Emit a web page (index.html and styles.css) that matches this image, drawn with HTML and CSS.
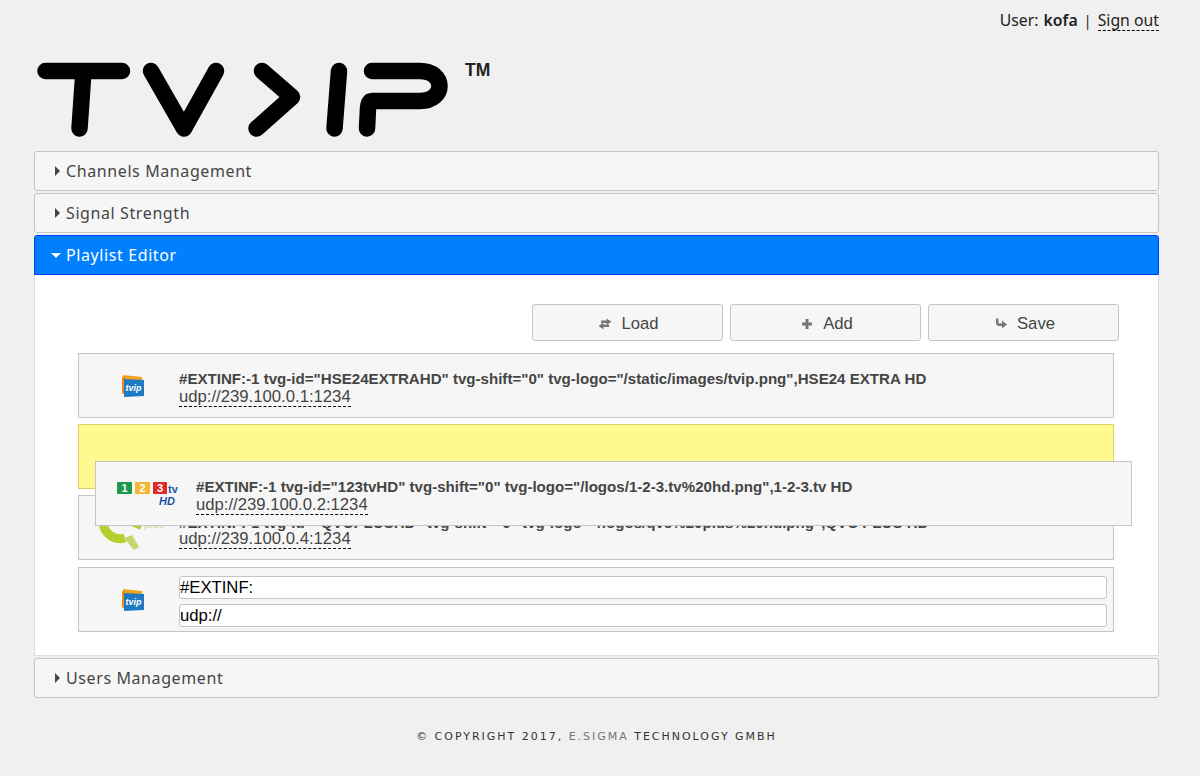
FILE: index.html
```html
<!DOCTYPE html>
<html lang="en">
<head>
<meta charset="utf-8">
<title>TV&gt;IP</title>
<link rel="stylesheet" href="styles.css">
</head>
<body>
<div class="page">
  <div class="userbar">User: <b>kofa</b> <span class="sep">|</span> <a class="dash" href="#">Sign out</a></div>
  <div class="logo">
    <svg width="456" height="97" viewBox="34 -8.500 456 97">
      <g fill="none" stroke="#000" stroke-width="16.500" stroke-linecap="round" stroke-linejoin="round">
        <path d="M45.500 8.500H122M83.500 8.500L79.500 66"/>
        <path d="M151 8.500L184 66L216 8.500"/>
        <path d="M262 8.500L292 34.500L256.500 66"/>
        <path d="M339 8.500L334.500 66"/>
        <path d="M372 8.500H420C446 8.500 446 38.500 420 38.500H372.500C369 38.500 368.500 41 368 46L367 66"/>
      </g>
    </svg>
    <span class="tm">TM</span>
  </div>
  <div class="acc"><span class="tri right"></span>Channels Management</div>
  <div class="acc"><span class="tri right"></span>Signal Strength</div>
  <div class="acc active"><span class="tri down"></span>Playlist Editor</div>
  <div class="panel">
    <div class="toolbar">
      <button class="btn">
        <svg class="ic" viewBox="0 0 14 12"><path d="M3 2.500H8.500V.5L13.500 3.800L8.500 7V5H3ZM11 6.500H5.500V4.500L.5 8L5.500 11.500V9H11Z" fill="#777"/></svg>Load</button>
      <button class="btn">
        <svg class="ic" viewBox="0 0 14 12"><path d="M5.500 1H8.500V4.500H12V7.500H8.500V11H5.500V7.500H2V4.500H5.500Z" fill="#777"/></svg>Add</button>
      <button class="btn">
        <svg class="ic" viewBox="0 0 14 12"><path d="M2 .5H4.500V4C4.500 5 5 5.500 6 5.500H8V2.500L13 6.500L8 10.500V8H5.500C3 8 2 6.500 2 4.500Z" fill="#777"/></svg>Save</button>
    </div>
    <div class="list">
      <div class="row">
        <div class="thumb"><svg class="tvip" viewBox="0 0 24 24"><path d="M2 1L21 3V7H2Z" fill="#f0a41e"/><path d="M1 3H4V21L1 19Z" fill="#f08a10"/><path d="M3 5L23 6V22L3 23Z" fill="#1f7ac4"/><text x="4.500" y="17" class="tvip-t">tvip</text></svg></div>
        <div class="info"><div class="ext">#EXTINF:-1 tvg-id="HSE24EXTRAHD" tvg-shift="0" tvg-logo="/static/images/tvip.png",HSE24 EXTRA HD</div><div class="url"><span class="dash">udp://239.100.0.1:1234</span></div></div>
      </div>
      <div class="placeholder"></div>
      <div class="row">
        <div class="thumb"><svg class="qvc" viewBox="0 0 70 46"><path d="M31 33A17 17 0 1 1 42 23" fill="none" stroke="#b5cf2e" stroke-width="9"/><path d="M30 33L38 30L45 42L40 45Z" fill="#c5d66a"/><text x="50" y="23" class="plus">plus</text></svg></div>
        <div class="info"><div class="ext low">#EXTINF:-1 tvg-id="QVCPLUSHD" tvg-shift="0" tvg-logo="/logos/qvc%20plus%20hd.png",QVC PLUS HD</div><div class="url"><span class="dash">udp://239.100.0.4:1234</span></div></div>
      </div>
      <div class="row edit">
        <div class="thumb"><svg class="tvip" viewBox="0 0 24 24"><path d="M2 1L21 3V7H2Z" fill="#f0a41e"/><path d="M1 3H4V21L1 19Z" fill="#f08a10"/><path d="M3 5L23 6V22L3 23Z" fill="#1f7ac4"/><text x="4.500" y="17" class="tvip-t">tvip</text></svg></div>
        <div class="info"><input class="field" value="#EXTINF:"><input class="field" value="udp://"></div>
      </div>
      <div class="row dragged">
        <div class="thumb"><svg class="one23" viewBox="0 0 64 24"><rect x="0" y="0" width="15" height="12" rx="1" fill="#1c9a4a"/><rect x="18" y="0" width="15" height="12" rx="1" fill="#f2b733"/><rect x="36" y="0" width="14" height="12" rx="1" fill="#df2a2a"/><text x="7.500" y="10" class="n">1</text><text x="25.500" y="10" class="n">2</text><text x="43" y="10" class="n">3</text><text x="51" y="11" class="tv">tv</text><text x="42" y="23" class="hd">HD</text></svg></div>
        <div class="info"><div class="ext">#EXTINF:-1 tvg-id="123tvHD" tvg-shift="0" tvg-logo="/logos/1-2-3.tv%20hd.png",1-2-3.tv HD</div><div class="url"><span class="dash">udp://239.100.0.2:1234</span></div></div>
      </div>
    </div>
  </div>
  <div class="acc last"><span class="tri right"></span>Users Management</div>
  <div class="footer">© COPYRIGHT 2017, <span class="brand">E.SIGMA</span> TECHNOLOGY GMBH</div>
</div>
</body>
</html>
```
FILE: styles.css
```css
* { box-sizing: border-box; }
html, body { margin: 0; height: 100%; }
body { background: #f0f0f0; color: #222; font-family: "DejaVu Sans", sans-serif; overflow: hidden; }
.page { width: 1125px; margin-left: 34px; }
.userbar { height: 54px; padding-top: 10px; text-align: right; font-size: 15.800px; line-height: 20px; font-family: "Noto Sans", sans-serif; }
.userbar b { font-weight: 600; margin-left: 1px; }
.sep { margin: 0 2px; font-size: 14px; }
a.dash, .dash { color: inherit; text-decoration: none; border-bottom: 1px dashed #000; }
.userbar .dash { display: inline-block; line-height: 20px; }
.logo { height: 97px; position: relative; }
.logo svg { display: block; }
.tm { position: absolute; left: 431px; top: 6px; font: bold 17.500px/20px "Liberation Sans", sans-serif; color: #222; }
.acc { height: 40px; margin-bottom: 2px; background: #f6f6f6; border: 1px solid #c5c5c5; border-radius: 3px; padding-left: 20px; font-size: 16px; line-height: 38px; letter-spacing: .6px; color: #454545; font-family: "Noto Sans", sans-serif; display: flex; align-items: center; }
.acc.active { background: #007fff; border-color: #003eff; color: #fff; margin-bottom: 0; border-radius: 3px 3px 0 0; }
.acc.last { margin-top: 2px; margin-bottom: 0; }
.tri { width: 0; height: 0; }
.tri.right { border-left: 5px solid #454545; border-top: 5px solid transparent; border-bottom: 5px solid transparent; margin-right: 6px; }
.tri.down { border-top: 5px solid #fff; border-left: 5px solid transparent; border-right: 5px solid transparent; margin-left: -4px; margin-right: 5px; }
.panel { height: 381px; background: #fff; border: 1px solid #ddd; border-top: 0; padding: 29px 39px 0 43px; position: relative; }
.toolbar { display: flex; justify-content: flex-end; gap: 7px; margin-bottom: 12px; }
.btn { width: 191px; height: 37px; background: #f6f6f6; border: 1px solid #c5c5c5; border-radius: 3px; color: #454545; font: 16.700px "Liberation Sans", sans-serif; display: flex; align-items: center; justify-content: center; padding: 2px 0 0 2px; }
.ic { width: 14px; height: 12px; margin-right: 9px; }
.list { width: 1036px; display: flex; flex-direction: column; gap: 6px; position: relative; }
.row { height: 65px; background: #f6f6f6; border: 1px solid #c5c5c5; display: flex; align-items: center; }
.row.edit { margin-top: 1px; }
.row.edit .info { padding-top: 4px; }
.thumb { width: 100px; flex: none; display: flex; justify-content: center; align-items: center; }
.info { flex: 1; min-width: 0; padding: 6px 6px 0 0; }
.ext { font: bold 15.100px/18px "Liberation Sans", sans-serif; color: #454545; white-space: nowrap; }
.ext.low { margin: 2px 0 -2px; }
.url { font: 16.700px/18px "Liberation Sans", sans-serif; color: #454545; }
.url .dash { display: inline-block; line-height: 18px; }
.placeholder { height: 65px; background: #fffa90; border: 1px solid #dad55e; }
.dragged { position: absolute; left: 17px; top: 108px; width: 1037px; z-index: 2; }
.field { display: block; width: 100%; height: 23px; border: 1px solid #c5c5c5; border-radius: 3px; background: #fff; font: 16.700px "Liberation Sans", sans-serif; color: #000; padding: 0; margin: 0; }
.field + .field { margin-top: 5px; }
.tvip { width: 24px; height: 24px; margin-left: 8px; }
.tvip-t { font: italic bold 9px "Liberation Sans", sans-serif; fill: #fff; }
.qvc { width: 70px; height: 46px; }
.plus { font: bold 10px "Liberation Sans", sans-serif; fill: #d3dfa8; }
.one23 { width: 64px; height: 24px; margin-left: 5px; }
.n { font: bold 11px "Liberation Sans", sans-serif; fill: #fff; text-anchor: middle; }
.tv { font: bold 11px "Liberation Sans", sans-serif; fill: #1d5c9e; }
.hd { font: italic bold 11px "Liberation Sans", sans-serif; fill: #1d4e9e; }
.footer { margin-top: 31px; text-align: center; font-size: 11px; line-height: 16px; letter-spacing: 1.980px; color: #333; font-family: "DejaVu Sans", sans-serif; }
.brand { color: #777; }
```
